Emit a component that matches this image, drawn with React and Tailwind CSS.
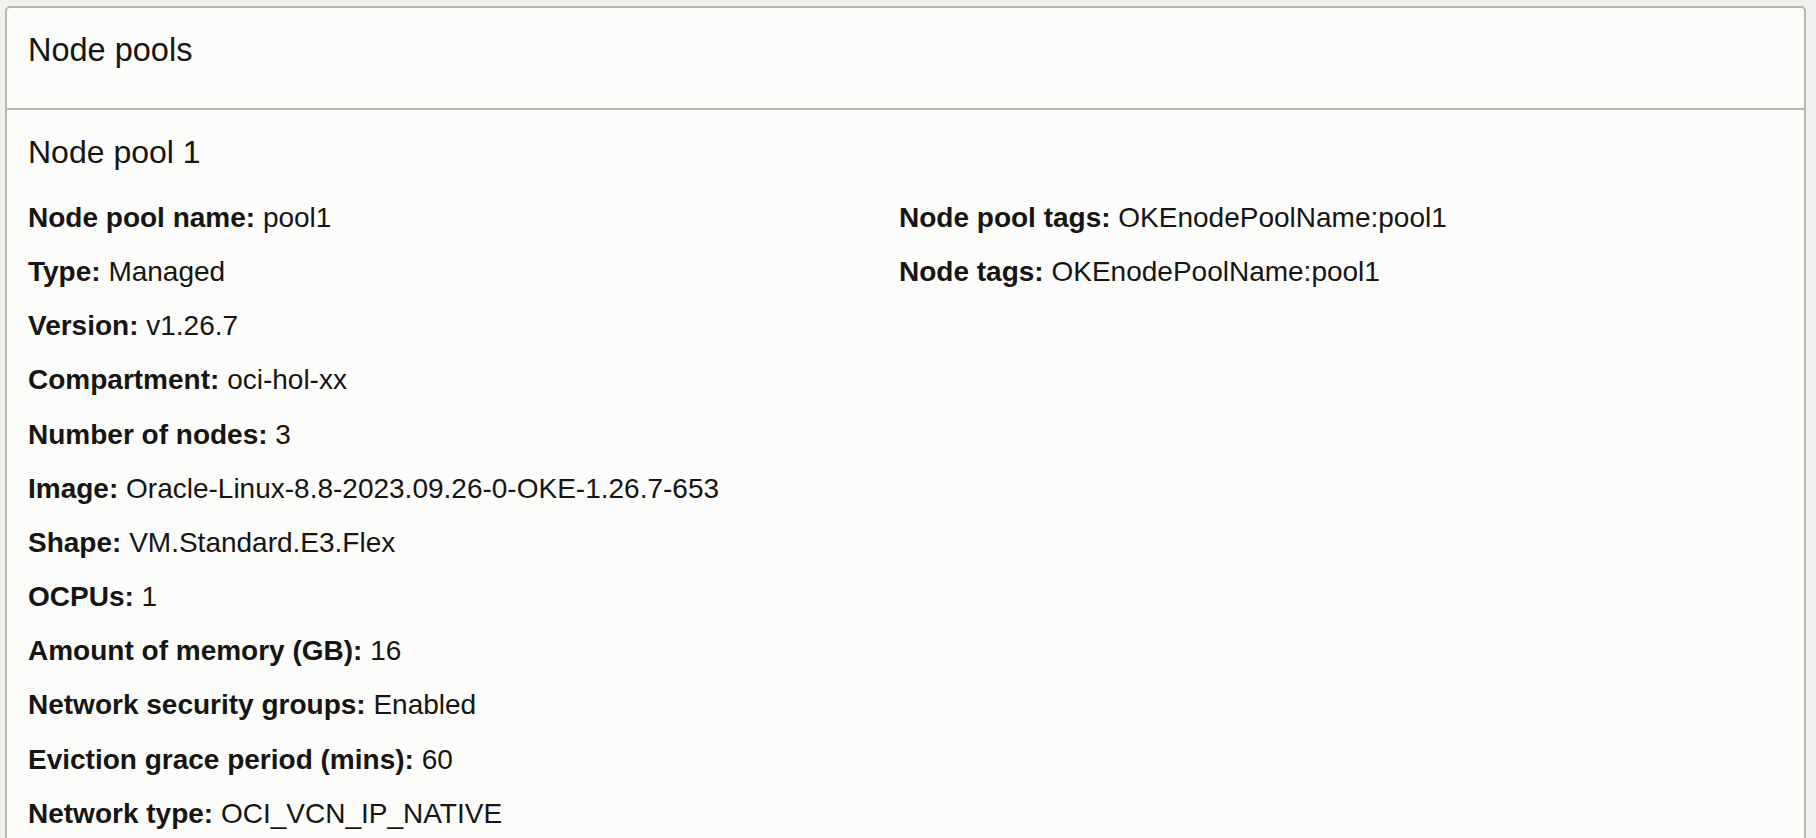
const leftRows = [
  ["Node pool name:", "pool1"],
  ["Type:", "Managed"],
  ["Version:", "v1.26.7"],
  ["Compartment:", "oci-hol-xx"],
  ["Number of nodes:", "3"],
  ["Image:", "Oracle-Linux-8.8-2023.09.26-0-OKE-1.26.7-653"],
  ["Shape:", "VM.Standard.E3.Flex"],
  ["OCPUs:", "1"],
  ["Amount of memory (GB):", "16"],
  ["Network security groups:", "Enabled"],
  ["Eviction grace period (mins):", "60"],
  ["Network type:", "OCI_VCN_IP_NATIVE"],
];

const rightRows = [
  ["Node pool tags:", "OKEnodePoolName:pool1"],
  ["Node tags:", "OKEnodePoolName:pool1"],
];

function Field({ label, value }) {
  return (
    <div className="leading-[54.15px] text-[28px] whitespace-nowrap">
      <span className="font-bold">{label}</span> {value}
    </div>
  );
}

export default function App() {
  return (
    <div
      className="min-h-screen bg-[#f2f0ee] pt-[6px] pl-[5px] text-[#161513]"
      style={{ fontFamily: '"Liberation Sans", Arial, sans-serif' }}
    >
      <div className="w-[1801px] min-h-[900px] bg-[#fcfcfa] border-2 border-[#bcb6b0] rounded-[5px]">
        <div className="h-[102px] border-b-2 border-[#bcb6b0] pt-[26px] px-[21px]">
          <h2 className="text-[32.5px] leading-[32px] font-normal">Node pools</h2>
        </div>
        <div className="pt-[26px] px-[21px]">
          <h3 className="text-[32px] leading-[32px] font-normal">Node pool 1</h3>
          <div className="flex mt-[23px]">
            <div className="w-[871px] shrink-0">
              {leftRows.map(([l, v]) => (
                <Field key={l} label={l} value={v} />
              ))}
            </div>
            <div className="flex-1">
              {rightRows.map(([l, v]) => (
                <Field key={l} label={l} value={v} />
              ))}
            </div>
          </div>
        </div>
      </div>
    </div>
  );
}
